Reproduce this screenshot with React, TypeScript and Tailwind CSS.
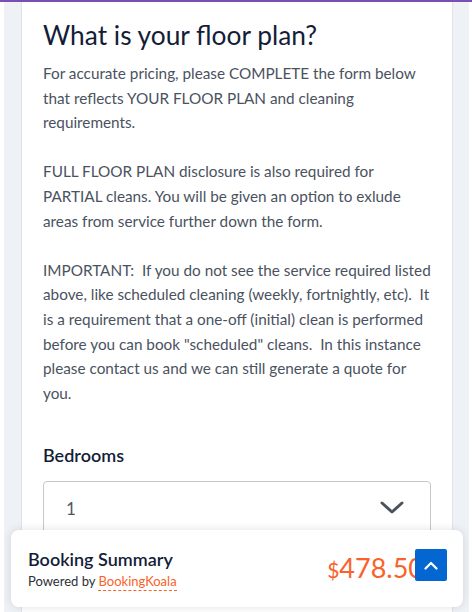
import React from "react";

export default function App() {
  return (
    <div className="relative h-[612px] w-[472px] overflow-hidden bg-white" style={{ fontFamily: "Lato, 'Noto Sans', sans-serif" }}>
      <div className="h-[2px] w-full bg-[#7a4fb0]" />
      <div className="ml-[4px] mr-[3px] flex h-[610px] bg-[#eef2f6] pl-[17px] pr-[16px]">
        <div className="flex-1 border-x border-[#dfe3e8] bg-white px-[21px] pt-[17px]">
          <h1 className="text-[26.3px] leading-[32px] font-normal text-[#141d38]">What is your floor plan?</h1>
          <p className="mt-[10px] text-[15.3px] leading-[24.6px] text-[#4a5260]">
            For accurate pricing, please COMPLETE the form below that reflects YOUR FLOOR PLAN and cleaning requirements.
            <br />
            <br />
            FULL FLOOR PLAN disclosure is also required for PARTIAL cleans. You will be given an option to exlude areas from service further down the form.
            <br />
            <br />
            IMPORTANT:&nbsp; If you do not see the service required listed above, like scheduled cleaning (weekly, fortnightly, etc).&nbsp; It is a requirement that a one-off (initial) clean is performed before you can book "scheduled" cleans.&nbsp; In this instance please contact us and we can still generate a quote for you.
          </p>
          <div className="mt-[38px] text-[18px] leading-[24px] font-semibold text-[#141d38]">Bedrooms</div>
          <div className="mt-[14px] flex h-[54px] items-center justify-between rounded-[4px] border border-[#c4c8cc] pl-[22px] pr-[26px]">
            <span className="text-[17px] text-[#4f5764]">1</span>
            <svg width="24" height="14" viewBox="0 0 24 14" fill="none">
              <path d="M2 2 L12 11 L22 2" stroke="#4b535c" strokeWidth="3" strokeLinecap="round" strokeLinejoin="round" />
            </svg>
          </div>
        </div>
      </div>
      <div className="absolute bottom-[5px] left-[11px] right-[9px] flex h-[77px] items-center justify-between rounded-[8px] bg-white pl-[17px] pr-[16px] shadow-[0_0_10px_rgba(0,0,0,0.12)]">
        <div className="flex flex-col">
          <span className="text-[18px] leading-[22px] font-semibold text-[#141d38]">Booking Summary</span>
          <span className="mt-[2px] text-[13px] leading-[18px] text-[#2b3038]">
            Powered by{" "}
            <span className="border-b border-dashed border-[#f9622a] pb-[1px] text-[#f9622a]">BookingKoala</span>
          </span>
        </div>
        <div className="relative flex items-center">
          <span className="mr-[-9px] flex items-baseline text-[#f9622a]">
            <span className="text-[21px]">$</span>
            <span className="text-[27px] leading-[32px]">478.50</span>
          </span>
          <div className="relative mb-[7px] flex h-[32px] w-[32px] items-center justify-center rounded-[2px] bg-[#0466d1]">
            <svg width="14" height="9" viewBox="0 0 14 9" fill="none">
              <path d="M1.5 7.5 L7 2 L12.5 7.5" stroke="white" strokeWidth="2.2" strokeLinecap="round" strokeLinejoin="round" />
            </svg>
          </div>
        </div>
      </div>
    </div>
  );
}
